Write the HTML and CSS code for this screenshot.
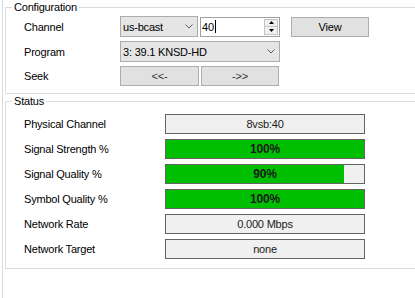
FILE: index.html
```html
<!DOCTYPE html>
<html lang="en">
    <head>
        <meta charset="UTF-8" />
        <meta name="viewport" content="width=device-width, initial-scale=1.0" />
        <title>Tuner</title>
        <link rel="stylesheet" href="styles.css">
    </head>
    <body>
        <div id="panel">
            <fieldset class="group">
                <legend>Configuration</legend>
                <div class="rows config-rows">
                    <div class="row">
                        <span class="label">Channel</span>
                        <div class="combo combo-short">
                            <span>us-bcast</span>
                            <svg class="chevron" width="8" height="5" viewBox="0 0 8 5"><path d="M0.5 0.5 L4 4 L7.5 0.5" fill="none" stroke="#606060" stroke-width="1" /></svg>
                        </div>
                        <div class="spin">
                            <span class="spin-value">40</span><span class="caret"></span>
                            <div class="spin-btns">
                                <span class="spin-btn"><svg width="5" height="3" viewBox="0 0 5 3"><path d="M0 3 L2.5 0 L5 3 Z" fill="#000" /></svg></span>
                                <span class="spin-btn"><svg width="5" height="3" viewBox="0 0 5 3"><path d="M0 0 L2.5 3 L5 0 Z" fill="#000" /></svg></span>
                            </div>
                        </div>
                        <button class="btn btn-view">View</button>
                    </div>
                    <div class="row">
                        <span class="label">Program</span>
                        <div class="combo combo-long">
                            <span>3: 39.1 KNSD-HD</span>
                            <svg class="chevron" width="8" height="5" viewBox="0 0 8 5"><path d="M0.5 0.5 L4 4 L7.5 0.5" fill="none" stroke="#606060" stroke-width="1" /></svg>
                        </div>
                    </div>
                    <div class="row">
                        <span class="label">Seek</span>
                        <button class="btn btn-seek">&lt;&lt;-</button>
                        <button class="btn btn-seek btn-next">-&gt;&gt;</button>
                    </div>
                </div>
            </fieldset>

            <fieldset class="group">
                <legend>Status</legend>
                <div class="rows status-rows">
                    <div class="row">
                        <span class="label label-wide">Physical Channel</span>
                        <div class="box"><span>8vsb:40</span></div>
                    </div>
                    <div class="row">
                        <span class="label label-wide">Signal Strength %</span>
                        <div class="box"><div class="fill" style="width: 100%"></div><span class="pct">100%</span></div>
                    </div>
                    <div class="row">
                        <span class="label label-wide">Signal Quality %</span>
                        <div class="box"><div class="fill" style="width: 90%"></div><span class="pct">90%</span></div>
                    </div>
                    <div class="row">
                        <span class="label label-wide">Symbol Quality %</span>
                        <div class="box"><div class="fill" style="width: 100%"></div><span class="pct">100%</span></div>
                    </div>
                    <div class="row">
                        <span class="label label-wide">Network Rate</span>
                        <div class="box"><span>0.000 Mbps</span></div>
                    </div>
                    <div class="row">
                        <span class="label label-wide">Network Target</span>
                        <div class="box"><span>none</span></div>
                    </div>
                </div>
            </fieldset>
        </div>
    </body>
</html>
```

FILE: styles.css
```css
body {
    font-family: "Liberation Sans", Arial, sans-serif;
    font-size: 11px;
    letter-spacing: -0.2px;
    color: #000;
    background-color: #fff;
    margin: 0;
    padding: 0 0 0 2px;
    overflow: hidden;
}

#panel {
    border-left: 1px solid #d9d9d9;
    min-height: 100vh;
    box-sizing: border-box;
}

.group {
    border: 1px solid #dcdcdc;
    margin: 0 -4px 0 2px;
    padding: 0;
    min-inline-size: 0;
}

.group legend {
    line-height: 14px;
    padding: 0 2px;
    margin-left: 6px;
}

.rows {
    display: flex;
    flex-direction: column;
    padding-left: 18px;
}

.config-rows {
    gap: 4px;
    padding-top: 2px;
    padding-bottom: 7px;
}

.status-rows {
    gap: 5px;
    padding-top: 6px;
    padding-bottom: 9px;
}

.row {
    display: flex;
    align-items: center;
}

.label {
    width: 96px;
    flex-shrink: 0;
}

.label-wide {
    width: 141px;
}

/* combo boxes */
.combo {
    height: 21px;
    box-sizing: border-box;
    background-color: #e5e5e5;
    border: 1px solid #acacac;
    display: flex;
    align-items: center;
    justify-content: space-between;
    padding: 0 4px 0 2px;
}

.combo-short {
    width: 78px;
    margin-right: 2px;
}

.combo-long {
    width: 160px;
}

/* numeric spinner */
.spin {
    width: 80px;
    height: 20px;
    box-sizing: border-box;
    border: 1px solid #a0a0a0;
    background-color: #fff;
    display: flex;
    align-items: center;
    padding-left: 1px;
    position: relative;
}

.caret {
    width: 1px;
    height: 13px;
    background-color: #000;
    margin-left: 1px;
}

.spin-btns {
    position: absolute;
    right: 1px;
    top: 1px;
    bottom: 1px;
    width: 14px;
    display: flex;
    flex-direction: column;
}

.spin-btn {
    flex: 1;
    display: flex;
    align-items: center;
    justify-content: center;
    background-color: #f0f0f0;
    border: 1px solid #c4c4c4;
}

.spin-btn + .spin-btn {
    border-top: none;
}

/* buttons */
.btn {
    font-family: inherit;
    font-size: 11px;
    letter-spacing: -0.2px;
    height: 20px;
    box-sizing: border-box;
    background-color: #e1e1e1;
    border: 1px solid #adadad;
    color: #000;
    padding: 0;
}

.btn-view {
    width: 78px;
    margin-left: 11px;
}

.btn-seek {
    width: 79px;
    color: #333;
}

.btn-next {
    width: 78px;
    margin-left: 2px;
}

/* status boxes */
.box {
    width: 200px;
    height: 20px;
    box-sizing: border-box;
    border: 1px solid #646464;
    background-color: #f0f0f0;
    position: relative;
    display: flex;
    align-items: center;
    justify-content: center;
    color: #1a1a1a;
}

.box .fill {
    position: absolute;
    left: 0;
    top: 0;
    bottom: 0;
    background-color: #00bf00;
}

.box span {
    position: relative;
}

.box .pct {
    font-size: 12px;
    font-weight: bold;
}
```
